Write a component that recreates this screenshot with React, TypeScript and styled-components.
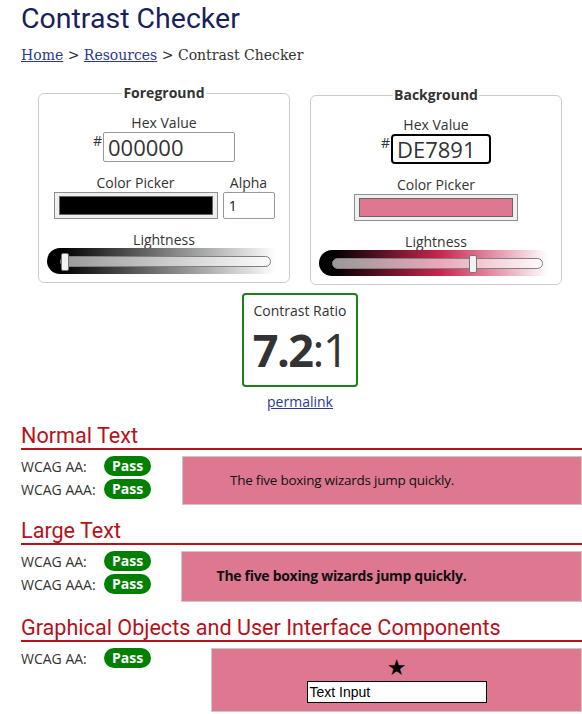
import React from 'react';
import styled, { createGlobalStyle } from 'styled-components';

const GlobalStyle = createGlobalStyle`
  body {
    margin: 0;
    background: #fff;
    font-family: 'Open Sans', 'Liberation Sans', sans-serif;
    color: #333;
  }
`;

const colors = {
  navy: '#1b1f5e',
  link: '#2b3990',
  red: '#b5121b',
  green: '#008000',
  sample: '#DE7891',
};

const Page = styled.div`
  padding: 1px 0 0 21px;
  width: 561px;
  overflow: hidden;
`;

const Title = styled.h1`
  margin: 0;
  font-family: Roboto, 'Liberation Sans', sans-serif;
  font-weight: 400;
  font-size: 28.5px;
  line-height: 36px;
  color: ${colors.navy};
`;

const Crumbs = styled.nav`
  margin-top: 8px;
  font-family: 'DejaVu Serif', 'Liberation Serif', serif;
  font-size: 14px;
  line-height: 20px;
  color: #333;

  a {
    color: ${colors.link};
    text-decoration: underline;
  }
`;

// panels, ratio and permalink sit a few px left of the page centre
const Centered = styled.div`
  padding-right: 3px;
`;

const Panels = styled.div`
  display: flex;
  justify-content: center;
  align-items: flex-start;
  gap: 20px;
  margin-top: 18px;
`;

const Panel = styled.fieldset<{ $shift?: number }>`
  box-sizing: border-box;
  width: 252px;
  margin: ${(p) => p.$shift || 0}px 0 0;
  padding: 10px 8px 8px;
  border: 1px solid #ccc;
  border-radius: 6px;
  display: flex;
  flex-direction: column;
  align-items: center;
  gap: 11px;
`;

const Legend = styled.legend`
  margin: 0 auto;
  padding: 0 1px;
  font-weight: 700;
  font-size: 14px;
  line-height: 20px;
  color: #333;
`;

const Field = styled.div<{ $wide?: boolean }>`
  display: flex;
  flex-direction: column;
  align-items: center;
  width: ${(p) => (p.$wide ? '100%' : 'auto')};
`;

const Label = styled.span`
  font-size: 14px;
  line-height: 19px;
  color: #333;
`;

const HexRow = styled.div`
  display: flex;
  align-items: flex-start;
`;

const Hash = styled.span`
  font-size: 14px;
  line-height: 14px;
  margin: 2px 1px 0 0;
`;

const HexInput = styled.div<{ $width: number; $focused?: boolean }>`
  box-sizing: border-box;
  width: ${(p) => p.$width}px;
  height: 30px;
  padding: 0 4px;
  border: ${(p) => (p.$focused ? '2px solid #000' : '1px solid #999')};
  border-radius: ${(p) => (p.$focused ? 4 : 2)}px;
  font-size: 22px;
  line-height: ${(p) => (p.$focused ? 26 : 28)}px;
  color: #333;
`;

const PickerRow = styled.div`
  display: flex;
  gap: 5px;
`;

const Swatch = styled.div`
  box-sizing: border-box;
  width: 164px;
  height: 27px;
  padding: 3px 4px;
  border: 1px solid #8f8f8f;
  background: #efefef;
  display: flex;
`;

const SwatchColor = styled.div<{ $color: string }>`
  flex: 1;
  background: ${(p) => p.$color};
  border: 1px solid #666;
`;

const AlphaInput = styled.div`
  box-sizing: border-box;
  width: 52px;
  height: 27px;
  padding: 0 5px;
  border: 1px solid #999;
  border-radius: 2px;
  font-size: 15px;
  line-height: 25px;
  color: #222;
`;

const SliderBar = styled.div<{ $gradient: string }>`
  position: relative;
  width: 100%;
  height: 26px;
  margin-top: -1px;
  border-radius: 13px;
  background: ${(p) => p.$gradient};
`;

const Track = styled.div`
  position: absolute;
  left: 13px;
  right: 10px;
  top: 8px;
  height: 11px;
  box-sizing: border-box;
  border: 1px solid #808080;
  border-radius: 6px;
  background: rgba(255, 255, 255, 0.6);
`;

const Thumb = styled.div`
  position: absolute;
  top: -4px;
  width: 8px;
  height: 18px;
  box-sizing: border-box;
  border: 1px solid #777;
  border-radius: 2px;
  background: #f2f2f2;
`;

const RatioBox = styled.div`
  box-sizing: border-box;
  width: 116px;
  height: 94px;
  margin: 8px auto 0;
  border: 2px solid #1a801a;
  border-radius: 4px;
  text-align: center;
  padding-top: 4px;
`;

const RatioValue = styled.div`
  margin-top: 3px;
  font-size: 45px;
  line-height: 52px;
  letter-spacing: -1.5px;
  color: #333;

  b {
    font-weight: 700;
  }
`;

const Permalink = styled.a`
  display: block;
  width: max-content;
  margin: 5px auto 0;
  font-size: 14px;
  line-height: 20px;
  color: ${colors.link};
  text-decoration: underline;
`;

const SectionTitle = styled.h2<{ $gap: number }>`
  margin: ${(p) => p.$gap}px 0 0;
  font-family: Roboto, 'Liberation Sans', sans-serif;
  font-weight: 400;
  font-size: 21.6px;
  line-height: 24px;
  color: ${colors.red};
  border-bottom: 2px solid ${colors.red};
`;

const Result = styled.div<{ $left: number }>`
  display: grid;
  grid-template-columns: ${(p) => p.$left}px 1fr;
  align-items: start;
  margin-top: 6px;
`;

const Levels = styled.div`
  display: grid;
  grid-template-columns: 83px auto;
  grid-auto-rows: 20px;
  row-gap: 3px;
  align-items: center;
  justify-items: start;
`;

const LevelName = styled.span`
  font-size: 14px;
  color: #333;
`;

const Badge = styled.span`
  height: 20px;
  padding: 0 8px;
  border-radius: 10px;
  background: ${colors.green};
  color: #fff;
  font-weight: 700;
  font-size: 14px;
  line-height: 20px;
`;

const Sample = styled.div<{ $bold?: boolean }>`
  background: ${colors.sample};
  border: 1px solid #c8c8c8;
  padding: ${(p) => (p.$bold ? '14px 88px 15px 8px' : '13px 88px 14px 8px')};
  text-align: center;
  font-size: ${(p) => (p.$bold ? 14 : 13.5)}px;
  font-weight: ${(p) => (p.$bold ? 700 : 400)};
  letter-spacing: ${(p) => (p.$bold ? -0.3 : -0.25)}px;
  line-height: 20px;
  color: #111;
`;

const UiSample = styled.div`
  background: ${colors.sample};
  border: 1px solid #c8c8c8;
  padding: 9px 0 8px;
  display: flex;
  flex-direction: column;
  align-items: center;
  gap: 3px;
`;

const Star = styled.span`
  font-family: 'DejaVu Sans', sans-serif;
  font-size: 22px;
  line-height: 20px;
  color: #000;
`;

const TextInput = styled.div`
  box-sizing: border-box;
  width: 180px;
  height: 22px;
  padding: 0 2px;
  border: 1px solid #000;
  background: #fff;
  font-family: 'Liberation Sans', Arial, sans-serif;
  font-size: 14px;
  line-height: 20px;
  color: #000;
`;

function Slider({ gradient, value }: { gradient: string; value: number }) {
  const left = (value / 100) * (211 - 8);
  return (
    <SliderBar $gradient={gradient}>
      <Track>
        <Thumb style={{ left }} />
      </Track>
    </SliderBar>
  );
}

function LevelList({ aaa = true }: { aaa?: boolean }) {
  return (
    <Levels>
      <LevelName>WCAG AA:</LevelName>
      <Badge>Pass</Badge>
      {aaa && (
        <>
          <LevelName>WCAG AAA:</LevelName>
          <Badge>Pass</Badge>
        </>
      )}
    </Levels>
  );
}

export default function App() {
  return (
    <Page>
      <GlobalStyle />
      <Title>Contrast Checker</Title>
      <Crumbs>
        <a href="#">Home</a> &gt; <a href="#">Resources</a> &gt; Contrast Checker
      </Crumbs>

      <Centered>
        <Panels>
          <Panel>
            <Legend>Foreground</Legend>
            <Field>
              <Label>Hex Value</Label>
              <HexRow>
                <Hash>#</Hash>
                <HexInput $width={132}>000000</HexInput>
              </HexRow>
            </Field>
            <PickerRow>
              <Field>
                <Label>Color Picker</Label>
                <Swatch>
                  <SwatchColor $color="#000" />
                </Swatch>
              </Field>
              <Field>
                <Label>Alpha</Label>
                <AlphaInput>1</AlphaInput>
              </Field>
            </PickerRow>
            <Field $wide>
              <Label>Lightness</Label>
              <Slider gradient="linear-gradient(to right, #000 6%, #fff 98%)" value={0} />
            </Field>
          </Panel>

          <Panel $shift={2}>
            <Legend>Background</Legend>
            <Field>
              <Label>Hex Value</Label>
              <HexRow>
                <Hash>#</Hash>
                <HexInput $width={100} $focused>
                  DE7891
                </HexInput>
              </HexRow>
            </Field>
            <Field>
              <Label>Color Picker</Label>
              <Swatch>
                <SwatchColor $color={colors.sample} />
              </Swatch>
            </Field>
            <Field $wide>
              <Label>Lightness</Label>
              <Slider
                gradient="linear-gradient(to right, #000 6%, #c9264f 52%, #fff 98%)"
                value={67}
              />
            </Field>
          </Panel>
        </Panels>

        <RatioBox>
          <Label>Contrast Ratio</Label>
          <RatioValue>
            <b>7.2</b>:1
          </RatioValue>
        </RatioBox>
        <Permalink href="#">permalink</Permalink>
      </Centered>

      <SectionTitle $gap={12}>Normal Text</SectionTitle>
      <Result $left={161}>
        <LevelList />
        <Sample>The five boxing wizards jump quickly.</Sample>
      </Result>

      <SectionTitle $gap={14}>Large Text</SectionTitle>
      <Result $left={160}>
        <LevelList />
        <Sample $bold>The five boxing wizards jump quickly.</Sample>
      </Result>

      <SectionTitle $gap={14}>Graphical Objects and User Interface Components</SectionTitle>
      <Result $left={190}>
        <LevelList aaa={false} />
        <UiSample>
          <Star>★</Star>
          <TextInput>Text Input</TextInput>
        </UiSample>
      </Result>
    </Page>
  );
}
